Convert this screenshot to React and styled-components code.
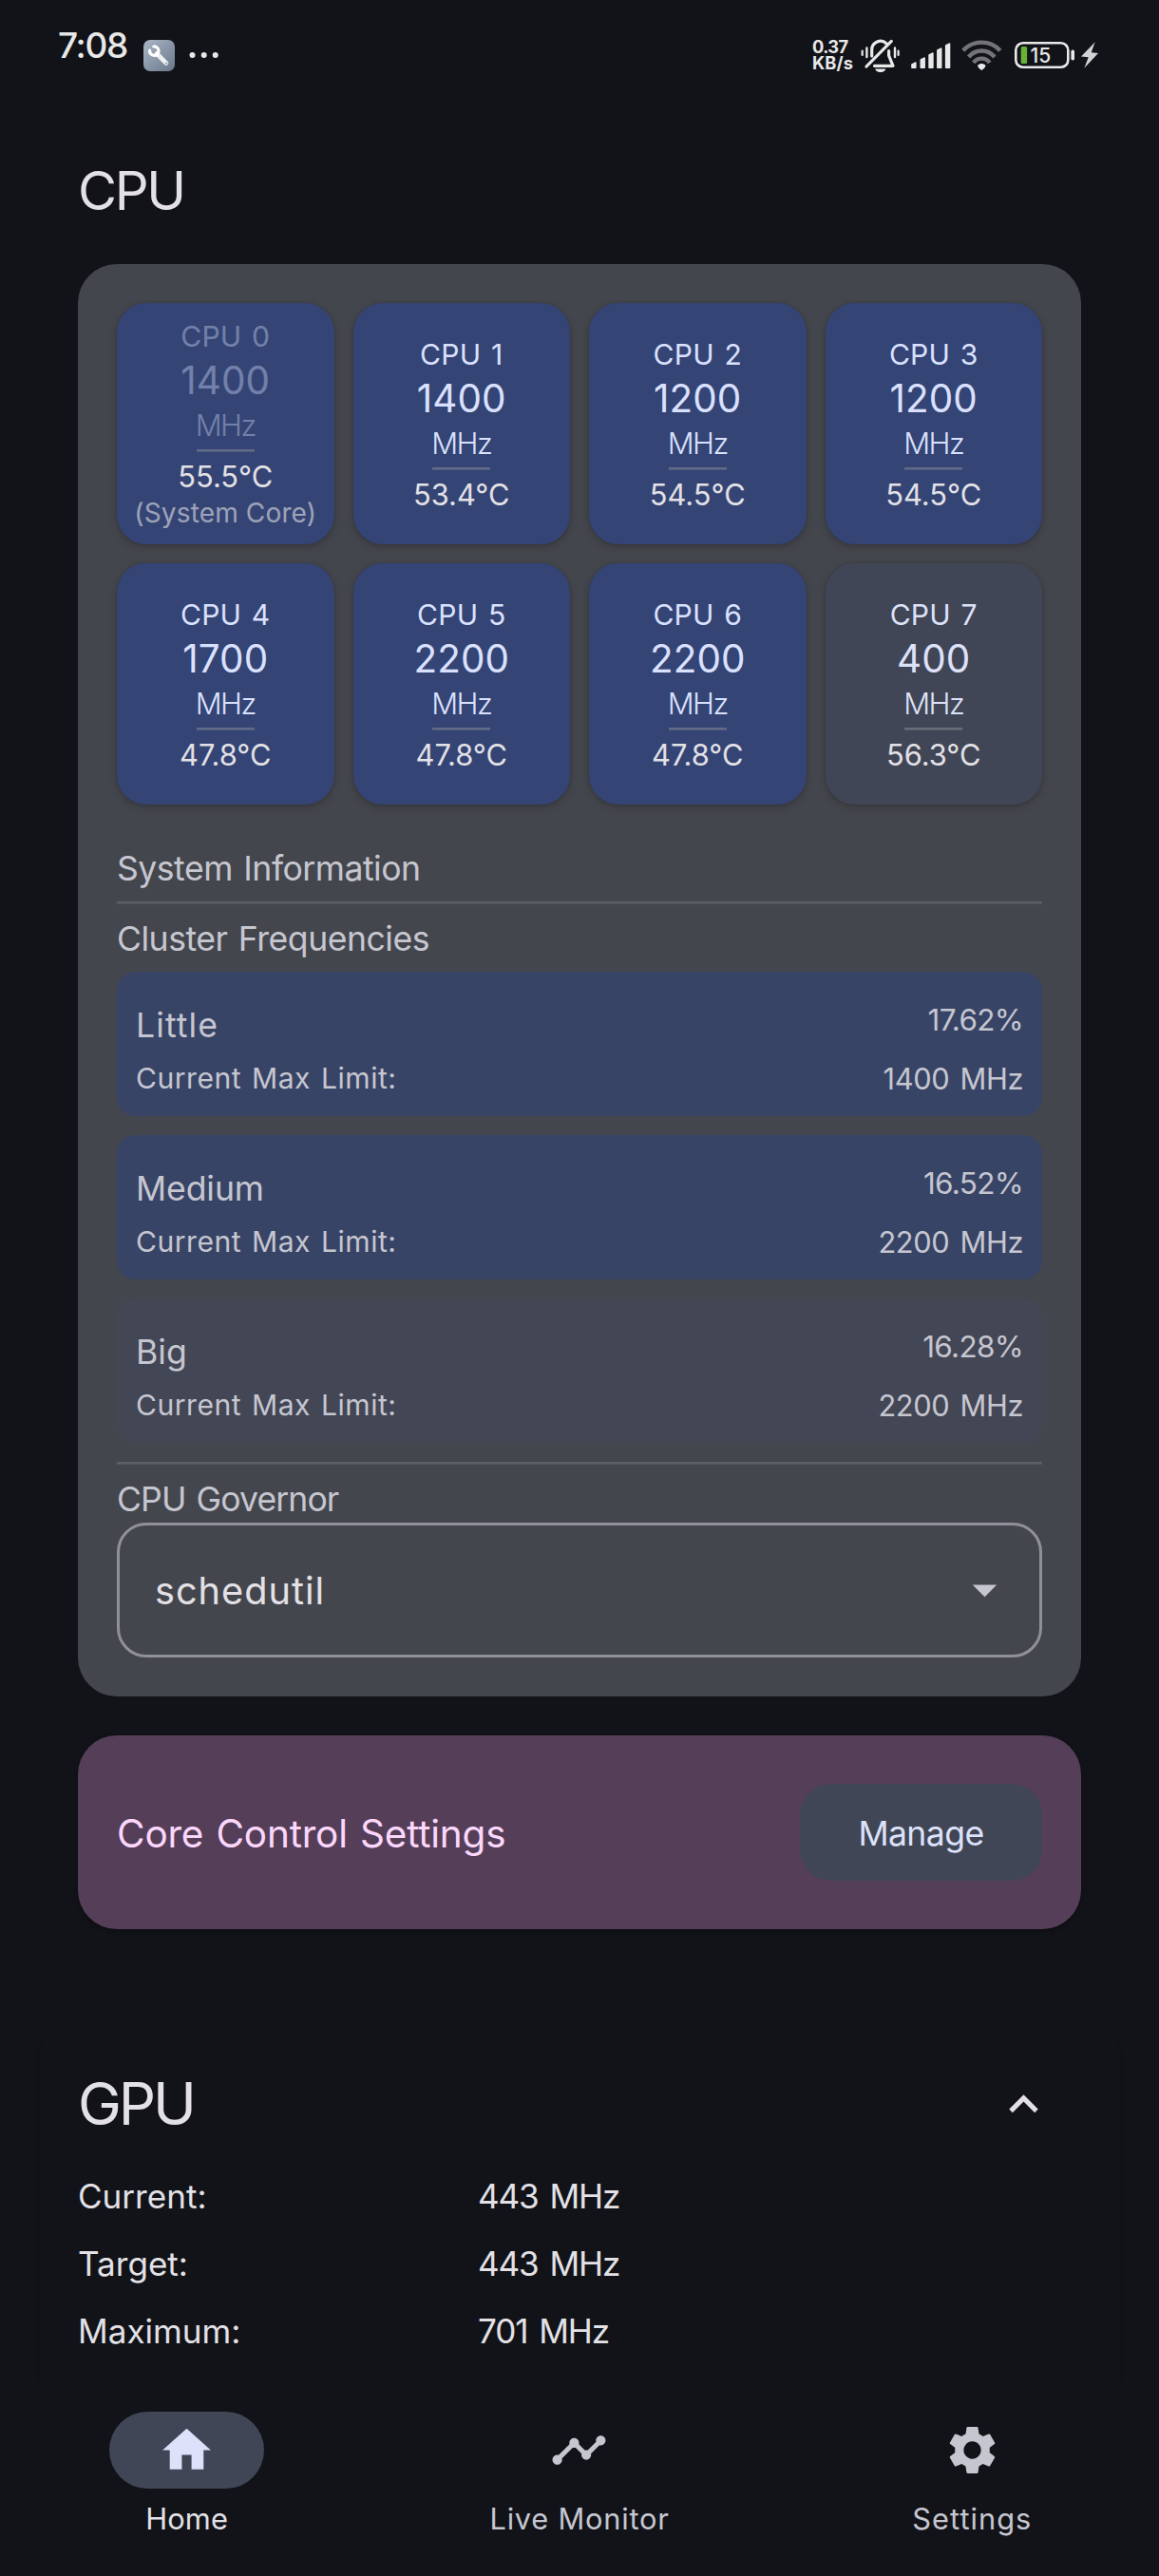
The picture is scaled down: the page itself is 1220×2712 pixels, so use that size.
import React from "react";
import styled, { createGlobalStyle } from "styled-components";
import { MdHome, MdTimeline, MdSettings, MdExpandLess, MdArrowDropDown } from "react-icons/md";

const color = {
  bg: "#111318",
  card: "#44464d",
  primary: "#344474",
  primaryFaded: "#384466",
  secondary: "#414656",
  secondaryFaded: "#434655",
  tertiary: "#553e57",
  onPrimary: "#dae1ff",
  onSecondary: "#dde1f9",
  onTertiary: "#fbd7fc",
  onSurface: "#e3e1e6",
  onSurfaceDim: "#c6c6d0",
  outline: "#8f909a",
  status: "#e8e8e8",
};

const GlobalStyle = createGlobalStyle`
  * { box-sizing: border-box; }
  body {
    margin: 0;
    background: ${color.bg};
    font-family: Inter, "Noto Sans", sans-serif;
    color: ${color.onSurface};
  }
`;

const Screen = styled.div`
  width: 1220px;
  height: 2712px;
  display: flex;
  flex-direction: column;
  overflow: hidden;
  background: ${color.bg};
`;

/* Status bar */

const StatusBar = styled.header`
  flex: none;
  height: 116px;
  padding: 0 63px 0 61px;
  display: flex;
  align-items: center;
  justify-content: space-between;
  color: ${color.status};
`;

const StatusSide = styled.div`
  display: flex;
  align-items: center;
  svg { display: block; flex: none; }
`;

const Clock = styled.span`
  width: 90px;
  margin-bottom: 21px;
  font-size: 37px;
  line-height: 44px;
  font-weight: 500;
  letter-spacing: -1.3px;
  white-space: nowrap;
`;

const NetSpeed = styled.div`
  width: 51px;
  font-size: 18.3px;
  line-height: 17px;
  font-weight: 700;
  white-space: nowrap;
`;

const SpeedValue = styled.div`
  letter-spacing: -0.6px;
`;

const SpeedUnit = styled.div`
  letter-spacing: 0.1px;
`;

const StatusSlot = styled.span`
  margin-left: ${(p) => p.$gap}px;
`;

/* Main content */

const Content = styled.main`
  flex: 1;
  min-height: 0;
  overflow: hidden;
  padding: 48px 41px 0;
  display: flex;
  flex-direction: column;
`;

const Section = styled.section`
  flex: none;
  padding: 0 41px;
`;

const Heading = styled.h1`
  margin: 0;
  font-weight: 400;
  font-size: 56.2px;
  line-height: 75px;
  letter-spacing: -2.4px;
`;

const Card = styled.div`
  height: 1508px;
  margin-top: 39px;
  padding: 41px;
  border-radius: 41px;
  background: ${color.card};
`;

const CoreGrid = styled.div`
  display: grid;
  grid-template-columns: repeat(4, 1fr);
  grid-auto-rows: 253.5px;
  gap: 20.5px 20px;
`;

const CoreTile = styled.div`
  padding-top: 2px;
  display: flex;
  flex-direction: column;
  align-items: center;
  justify-content: center;
  border-radius: 31px;
  background: ${(p) => (p.$idle ? color.secondary : color.primary)};
  color: ${(p) => (p.$idle ? color.onSecondary : color.onPrimary)};
  box-shadow: 0 3px 8px rgba(0, 0, 0, 0.2), 0 0 3px rgba(0, 0, 0, 0.1);
  white-space: nowrap;
`;

const CoreName = styled.div`
  font-size: 30.1px;
  line-height: 41px;
  letter-spacing: 0.2px;
  word-spacing: 2px;
  opacity: ${(p) => (p.$dim ? 0.38 : 1)};
`;

const CoreClock = styled.div`
  font-size: 40.4px;
  line-height: 52px;
  letter-spacing: 0.1px;
  opacity: ${(p) => (p.$dim ? 0.38 : 1)};
`;

const CoreUnit = styled.div`
  font-size: 31px;
  line-height: 41px;
  font-weight: 350;
  letter-spacing: -1.6px;
  opacity: ${(p) => (p.$dim ? 0.38 : 1)};
`;

const CoreRule = styled.div`
  width: 61px;
  height: 3px;
  margin: 5px 0;
  background: linear-gradient(#8f909a 66%, rgba(143, 144, 154, 0.6) 66%);
  opacity: 0.5;
`;

const CoreTemp = styled.div`
  font-size: 30.8px;
  line-height: 41px;
  color: ${color.onSurface};
`;

const CoreNote = styled.div`
  font-size: 28.1px;
  line-height: 37px;
  letter-spacing: 0.1px;
  color: ${color.onSurface};
  opacity: 0.6;
`;

const SubTitle = styled.h2`
  margin: ${(p) => p.$top || 0}px 0 0;
  padding-top: 1px;
  height: 50px;
  font-weight: 400;
  font-size: 35.6px;
  line-height: 50px;
  letter-spacing: ${(p) => p.$track}px;
  word-spacing: 2px;
  color: ${color.onSurfaceDim};
`;

const Divider = styled.div`
  height: 3px;
  margin: ${(p) => p.$top}px 0 11px;
  background: linear-gradient(#5d5f68 66%, #52545c 66%);
`;

const ClusterList = styled.div`
  display: flex;
  flex-direction: column;
  gap: 20px;
  margin-top: 10px;
`;

const Cluster = styled.div`
  height: 152px;
  padding: 31px 20px 0;
  border-radius: 20px;
  background: ${(p) => (p.$idle ? color.secondaryFaded : color.primaryFaded)};
  color: ${color.onSurfaceDim};
`;

const ClusterRow = styled.div`
  display: flex;
  justify-content: space-between;
  align-items: flex-start;
  white-space: nowrap;
`;

const ClusterName = styled.span`
  margin-bottom: 10px;
  font-size: 35.6px;
  line-height: 51px;
  letter-spacing: ${(p) => p.$track}px;
`;

const ClusterLoad = styled.span`
  font-size: 31.5px;
  line-height: 40px;
  letter-spacing: -0.7px;
`;

const ClusterLabel = styled.span`
  font-size: 30.1px;
  line-height: 41px;
  letter-spacing: 0.5px;
  word-spacing: 2px;
`;

const ClusterLimit = styled.span`
  font-size: 30.8px;
  line-height: 41px;
  letter-spacing: -0.4px;
  word-spacing: 3px;
`;

const Select = styled.div`
  height: 142px;
  padding: 3px 27px 0 37px;
  display: flex;
  align-items: center;
  justify-content: space-between;
  border: 3px solid ${color.outline};
  border-radius: 31px;
  font-size: 39.7px;
  letter-spacing: 1px;
  svg { display: block; margin-bottom: 3px; color: ${color.onSurfaceDim}; }
`;

const ActionCard = styled.div`
  height: 204px;
  margin-top: 41px;
  padding: 0 41px;
  display: flex;
  align-items: center;
  justify-content: space-between;
  border-radius: 41px;
  background: ${color.tertiary};
  color: ${color.onTertiary};
  box-shadow: 0 2px 4px rgba(0, 0, 0, 0.3);
`;

const ActionTitle = styled.span`
  padding-top: 2px;
  font-size: 40.5px;
  letter-spacing: -0.2px;
  word-spacing: 2px;
`;

const ActionButton = styled.button`
  width: 255px;
  height: 102px;
  padding: 2px 0 0;
  border: 0;
  border-radius: 32px;
  background: ${color.secondary};
  color: ${color.onSecondary};
  font: inherit;
  font-size: 35.6px;
  letter-spacing: -0.6px;
`;

const Panel = styled.section`
  flex: none;
  height: 700px;
  margin-top: 102px;
  padding: 41px;
  border-radius: 31px;
  background: ${color.bg};
  box-shadow: 0 2px 4px rgba(0, 0, 0, 0.22);
`;

const PanelHeader = styled.div`
  display: flex;
  align-items: center;
  justify-content: space-between;
`;

const PanelTitle = styled.h1`
  margin: 0;
  font-weight: 400;
  font-size: 61.6px;
  line-height: 82px;
  letter-spacing: -3.1px;
`;

const PanelToggle = styled.div`
  width: 122px;
  display: flex;
  justify-content: center;
`;

const StatGrid = styled.dl`
  margin: 31px 0 0;
  display: grid;
  grid-template-columns: 421px 1fr;
  row-gap: 20px;
  font-size: 35.1px;
  line-height: 51px;
`;

const StatLabel = styled.dt`
  letter-spacing: 0;
`;

const StatValue = styled.dd`
  margin: 0;
  letter-spacing: -1.1px;
  word-spacing: 3px;
`;

/* Bottom navigation */

const NavBar = styled.nav`
  flex: none;
  height: 204px;
  padding-top: 31px;
  display: grid;
  grid-template-columns: repeat(3, 1fr);
  column-gap: 20px;
  background: ${color.bg};
`;

const NavItem = styled.div`
  display: flex;
  flex-direction: column;
  align-items: center;
  color: ${(p) => (p.$active ? color.onSurface : color.onSurfaceDim)};
`;

const NavPill = styled.div`
  width: 163px;
  height: 81px;
  display: flex;
  align-items: center;
  justify-content: center;
  border-radius: 41px;
  background: ${(p) => (p.$active ? color.secondary : "transparent")};
  color: ${(p) => (p.$active ? color.onSecondary : color.onSurfaceDim)};
`;

const NavLabel = styled.span`
  margin-top: 11px;
  font-size: 30.8px;
  line-height: 41px;
  letter-spacing: ${(p) => p.$track}px;
  white-space: nowrap;
`;

/* Status bar drawings */

const ToolIcon = () => (
  <svg width="33" height="33" viewBox="0 0 33 33">
    <defs>
      <linearGradient id="tool" x1="0" y1="0" x2="1" y2="1">
        <stop offset="0" stopColor="#abb7c6" />
        <stop offset="1" stopColor="#69778a" />
      </linearGradient>
    </defs>
    <rect width="33" height="33" rx="7" fill="url(#tool)" />
    <path d="M14 14.5L24 24.5" stroke="#eef1f4" strokeWidth="4.6" strokeLinecap="round" />
    <path d="M6.6 11.2a4.7 4.7 0 1 0 4.2-4.2" fill="none" stroke="#fff" strokeWidth="3.2" strokeLinecap="round" />
    <path d="M11 15.500l4-4 2 3-3 3z" fill="#fff" />
    <circle cx="24.2" cy="24.7" r="1" fill="#7b8899" />
  </svg>
);

const MoreIcon = () => (
  <svg width="32" height="8" viewBox="0 0 32 8" fill="currentColor">
    <circle cx="3.5" cy="4" r="3" />
    <circle cx="15.7" cy="4" r="3" />
    <circle cx="27.7" cy="4" r="3" />
  </svg>
);

const MutedIcon = () => (
  <svg width="41" height="36" viewBox="0 0 41 36" fill="none" stroke="currentColor" strokeWidth="3.2" strokeLinecap="round" strokeLinejoin="round">
    <path d="M11.7 19v-6.7a9 9 0 0 1 15.4-6.4" />
    <path d="M29.6 13.5v5l4.400 10.800H14.5" />
    <path d="M6 30L32.3 3.400" />
    <path d="M6.400 10.500v9.500M36 10.500v9.500" strokeWidth="2.400" />
    <path d="M1.700 13.500v4.500M39.600 13.500v4.500" strokeWidth="2.200" />
    <path d="M15.300 32.600h11a5.500 3.500 0 0 1-11 0z" fill="currentColor" stroke="none" />
  </svg>
);

const SIGNAL_BARS = [
  [0.9, 26],
  [10.2, 21],
  [19, 16],
  [27.8, 11],
  [36.6, 6],
];

const SignalIcon = () => (
  <svg width="42" height="36" viewBox="0 0 42 36" fill="currentColor" stroke="currentColor" strokeWidth="1.4" strokeLinejoin="round">
    {SIGNAL_BARS.map(([x, y]) => (
      <path key={x} d={`M${x} ${y + 2}l4-2V31.2h-4z`} />
    ))}
  </svg>
);

const WifiIcon = () => (
  <svg width="43" height="36" viewBox="0 0 43 36" fill="none" stroke="#747478" strokeWidth="4.4">
    <path d="M1.8 13.2a26.4 26.4 0 0 1 39 0" />
    <path d="M7.6 20a17.6 17.6 0 0 1 27.4 0" />
    <path d="M12.8 26a10.4 10.4 0 0 1 17 0" />
    <path d="M17.2 28.6c2.4-2.2 5.8-2.2 8.2 0 .2 2-1.6 4.2-4.1 5.3-2.5-1.1-4.3-3.3-4.1-5.3z" fill={color.status} stroke="none" />
  </svg>
);

const BatteryIcon = ({ level }) => (
  <svg width="64" height="36" viewBox="0 0 64 36" fill="none">
    <rect x="1.3" y="5.3" width="55" height="25.4" rx="7.5" stroke={color.status} strokeWidth="2.6" />
    <rect x="59.4" y="12.6" width="3.6" height="10.8" rx="1.6" fill={color.status} />
    <rect x="6.7" y="9" width="6.4" height="18" rx="1.5" fill="#67b237" />
    <text x="16.6" y="25.8" fontSize="21" fontWeight="500" fill={color.status}>
      {level}
    </text>
  </svg>
);

const BoltIcon = () => (
  <svg width="19" height="36" viewBox="0 0 19 36" fill="#d2d2d3">
    <path d="M14.7 4.3L0 19.6l7.7.6-4.4 11.5L18 16l-7.3-.8z" />
  </svg>
);

const CORES = [
  { clock: 1400, temp: "55.5", system: true },
  { clock: 1400, temp: "53.4" },
  { clock: 1200, temp: "54.5" },
  { clock: 1200, temp: "54.5" },
  { clock: 1700, temp: "47.8" },
  { clock: 2200, temp: "47.8" },
  { clock: 2200, temp: "47.8" },
  { clock: 400, temp: "56.3", idle: true },
];

const CLUSTERS = [
  { name: "Little", load: "17.62%", limit: 1400, track: 1.1 },
  { name: "Medium", load: "16.52%", limit: 2200, track: -0.1 },
  { name: "Big", load: "16.28%", limit: 2200, track: 0, idle: true },
];

const GPU_STATS = [
  ["Current:", "443 MHz"],
  ["Target:", "443 MHz"],
  ["Maximum:", "701 MHz"],
];

const TABS = [
  { label: "Home", Icon: MdHome, active: true, track: 0.15 },
  { label: "Live Monitor", Icon: MdTimeline, track: 0.75 },
  { label: "Settings", Icon: MdSettings, track: 1 },
];

export default function App() {
  return (
    <Screen>
      <GlobalStyle />
      <StatusBar>
        <StatusSide>
          <Clock>7:08</Clock>
          <ToolIcon />
          <StatusSlot $gap={15}>
            <MoreIcon />
          </StatusSlot>
        </StatusSide>
        <StatusSide>
          <NetSpeed>
            <SpeedValue>0.37</SpeedValue>
            <SpeedUnit>KB/s</SpeedUnit>
          </NetSpeed>
          <MutedIcon />
          <StatusSlot $gap={12}>
            <SignalIcon />
          </StatusSlot>
          <StatusSlot $gap={11}>
            <WifiIcon />
          </StatusSlot>
          <StatusSlot $gap={13}>
            <BatteryIcon level={15} />
          </StatusSlot>
          <StatusSlot $gap={6}>
            <BoltIcon />
          </StatusSlot>
        </StatusSide>
      </StatusBar>

      <Content>
        <Section>
          <Heading>CPU</Heading>
          <Card>
            <CoreGrid>
              {CORES.map((core, i) => (
                <CoreTile key={i} $idle={core.idle}>
                  <CoreName $dim={core.system}>CPU {i}</CoreName>
                  <CoreClock $dim={core.system}>{core.clock}</CoreClock>
                  <CoreUnit $dim={core.system}>MHz</CoreUnit>
                  <CoreRule />
                  <CoreTemp>{core.temp}°C</CoreTemp>
                  {core.system && <CoreNote>(System Core)</CoreNote>}
                </CoreTile>
              ))}
            </CoreGrid>
            <SubTitle $top={42} $track={-0.5}>System Information</SubTitle>
            <Divider $top={10} />
            <SubTitle $track={-0.5}>Cluster Frequencies</SubTitle>
            <ClusterList>
              {CLUSTERS.map((cluster) => (
                <Cluster key={cluster.name} $idle={cluster.idle}>
                  <ClusterRow>
                    <ClusterName $track={cluster.track}>{cluster.name}</ClusterName>
                    <ClusterLoad>{cluster.load}</ClusterLoad>
                  </ClusterRow>
                  <ClusterRow>
                    <ClusterLabel>Current Max Limit:</ClusterLabel>
                    <ClusterLimit>{cluster.limit} MHz</ClusterLimit>
                  </ClusterRow>
                </Cluster>
              ))}
            </ClusterList>
            <Divider $top={20} />
            <SubTitle $track={-0.9}>CPU Governor</SubTitle>
            <Select>
              schedutil
              <MdArrowDropDown size={61} />
            </Select>
          </Card>
          <ActionCard>
            <ActionTitle>Core Control Settings</ActionTitle>
            <ActionButton type="button">Manage</ActionButton>
          </ActionCard>
        </Section>

        <Panel>
          <PanelHeader>
            <PanelTitle>GPU</PanelTitle>
            <PanelToggle>
              <MdExpandLess size={61} />
            </PanelToggle>
          </PanelHeader>
          <StatGrid>
            {GPU_STATS.map(([label, value]) => (
              <React.Fragment key={label}>
                <StatLabel>{label}</StatLabel>
                <StatValue>{value}</StatValue>
              </React.Fragment>
            ))}
          </StatGrid>
        </Panel>
      </Content>

      <NavBar>
        {TABS.map(({ label, Icon, active, track }) => (
          <NavItem key={label} $active={active}>
            <NavPill $active={active}>
              <Icon size={61} />
            </NavPill>
            <NavLabel $track={track}>{label}</NavLabel>
          </NavItem>
        ))}
      </NavBar>
    </Screen>
  );
}
